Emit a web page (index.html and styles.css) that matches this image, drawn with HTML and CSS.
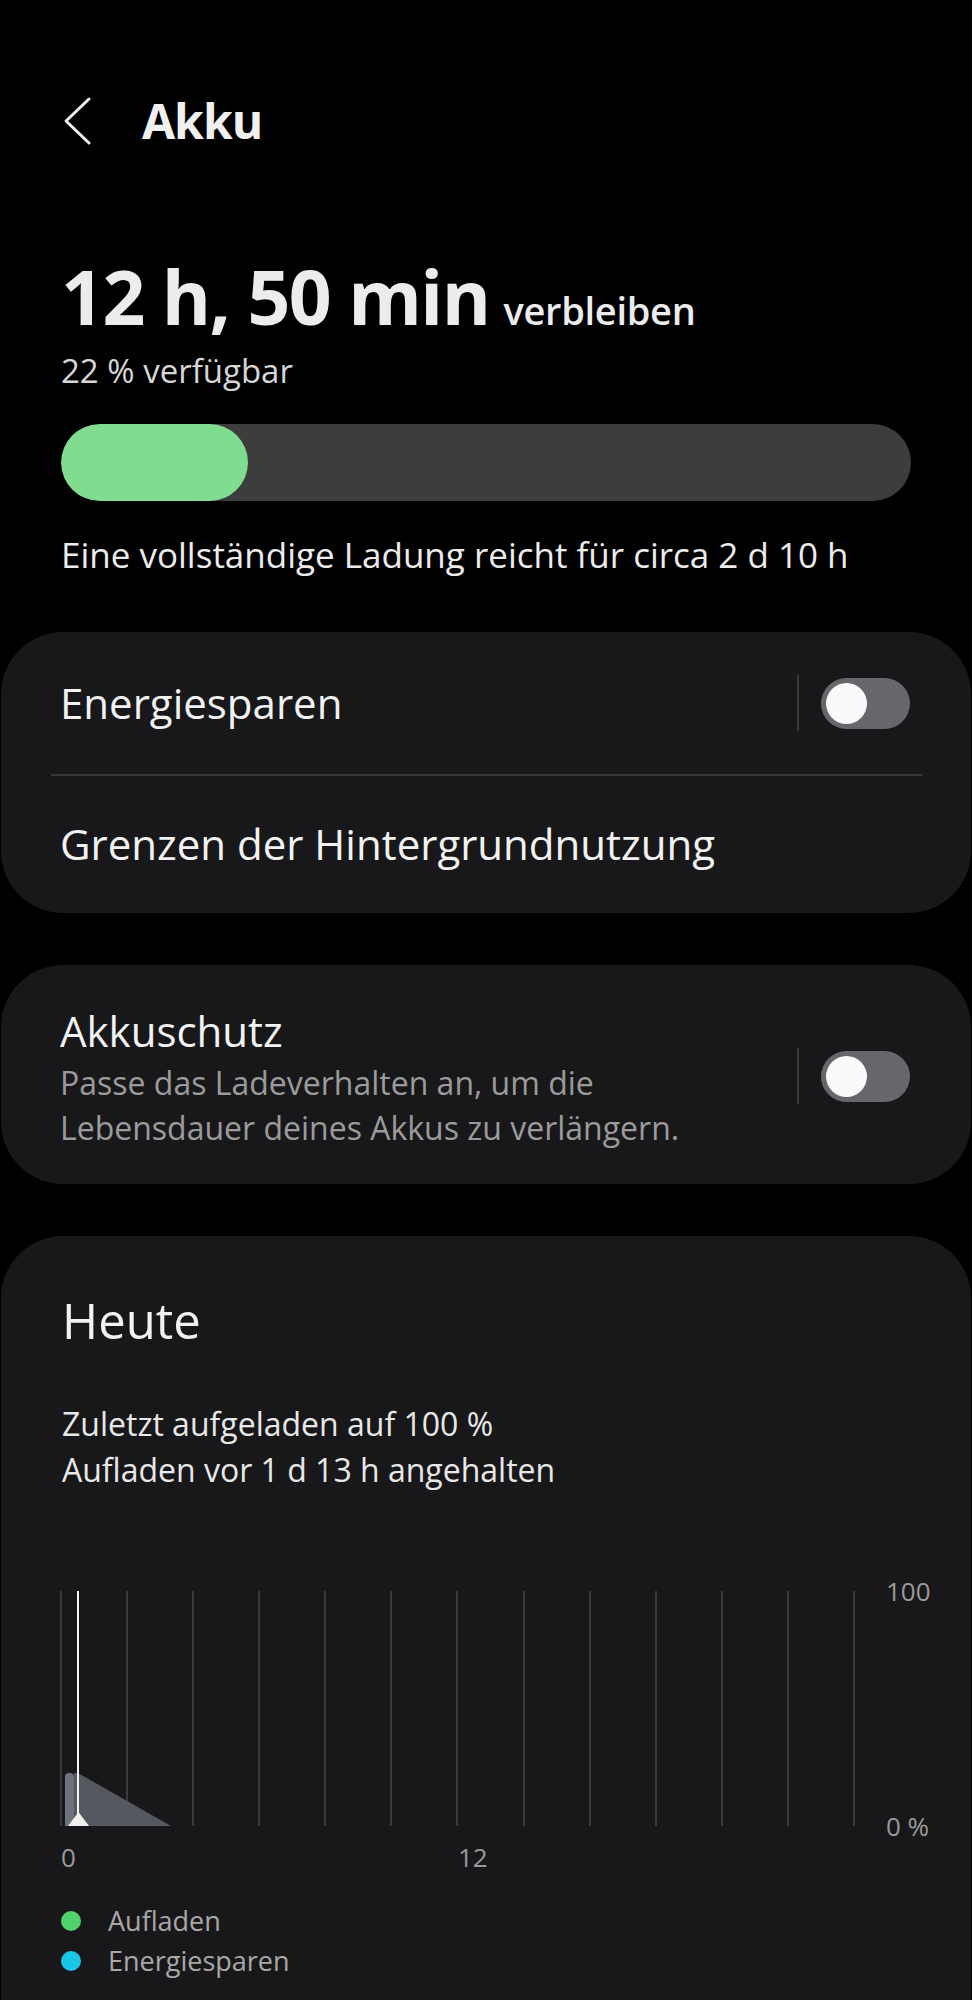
FILE: index.html
```html
<!DOCTYPE html>
<html lang="de">
<head>
  <meta charset="UTF-8">
  <meta name="viewport" content="width=device-width, initial-scale=1.0">
  <title>Akku</title>
  <link rel="stylesheet" href="styles.css">
</head>
<body>
  <div class="topbar">
    <svg class="back" width="30" height="50" viewBox="0 0 30 50">
      <polyline points="27,3 4,25 27,47" fill="none" stroke="#f2f2f2" stroke-width="3" stroke-linecap="round" stroke-linejoin="round"/>
    </svg>
    <h1>Akku</h1>
  </div>

  <div class="summary">
    <div class="remain"><span class="big">12 h, 50 min</span><span class="unit">verbleiben</span></div>
    <div class="level">22 % verfügbar</div>
    <div class="bar"><div class="bar-fill" style="width: 22%"></div></div>
    <div class="full">Eine vollständige Ladung reicht für circa 2 d 10 h</div>
  </div>

  <div class="card">
    <div class="row">
      <div class="row-title">Energiesparen</div>
      <div class="switch-wrap">
        <span class="vsep"></span>
        <span class="toggle"><span class="knob"></span></span>
      </div>
    </div>
    <div class="divider"></div>
    <div class="row row-last">
      <div class="row-title">Grenzen der Hintergrundnutzung</div>
    </div>
  </div>

  <div class="card card-protect">
    <div class="row-text">
      <div class="row-title">Akkuschutz</div>
      <div class="row-sub">Passe das Ladeverhalten an, um die<br>Lebensdauer deines Akkus zu verlängern.</div>
    </div>
    <div class="switch-wrap">
      <span class="vsep"></span>
      <span class="toggle"><span class="knob"></span></span>
    </div>
  </div>

  <div class="card card-today">
    <h2>Heute</h2>
    <p class="charge-info">Zuletzt aufgeladen auf 100 %<br>Aufladen vor 1 d 13 h angehalten</p>

    <div class="chart">
      <div class="plot-row">
        <svg class="plot" width="797" height="235" viewBox="0 0 797 235">
          <g stroke="#3a3a3c" stroke-width="2">
            <line x1="1" y1="0" x2="1" y2="235"/>
            <line x1="67" y1="0" x2="67" y2="235"/>
            <line x1="133" y1="0" x2="133" y2="235"/>
            <line x1="199" y1="0" x2="199" y2="235"/>
            <line x1="265" y1="0" x2="265" y2="235"/>
            <line x1="331" y1="0" x2="331" y2="235"/>
            <line x1="397" y1="0" x2="397" y2="235"/>
            <line x1="464" y1="0" x2="464" y2="235"/>
            <line x1="530" y1="0" x2="530" y2="235"/>
            <line x1="596" y1="0" x2="596" y2="235"/>
            <line x1="662" y1="0" x2="662" y2="235"/>
            <line x1="728" y1="0" x2="728" y2="235"/>
            <line x1="794" y1="0" x2="794" y2="235"/>
          </g>
          <!-- restliche Laufzeit -->
          <polygon points="18,182 111,235 14,235 14,182" fill="#55585e"/>
          <!-- bisheriger Verlauf -->
          <path d="M5,235 L5,186 Q5,182 9,182 L10,182 Q14,182 14,186 L14,235 Z" fill="#6c727d"/>
          <line x1="18" y1="0" x2="18" y2="235" stroke="#f4f4f4" stroke-width="2"/>
          <polygon points="8,235 29,235 18.5,221" fill="#f0f0f0"/>
        </svg>
        <div class="y-axis"><span>100</span><span>0 %</span></div>
      </div>
      <div class="x-axis"><span>0</span><span>12</span></div>
    </div>

    <ul class="legend">
      <li><span class="dot dot-charge"></span>Aufladen</li>
      <li><span class="dot dot-save"></span>Energiesparen</li>
    </ul>
  </div>
</body>
</html>
```

FILE: styles.css
```css
body {
  margin: 0;
  background: #000;
  color: #f0f0f0;
  font-family: "Open Sans", "Liberation Sans", sans-serif;
}

.topbar {
  display: flex;
  align-items: center;
  height: 86px;
  margin-top: 78px;
  padding-left: 62px;
}
.back {
  display: block;
}
h1 {
  margin: 0 0 0 50px;
  font-size: 48px;
  line-height: 1;
  font-weight: 700;
  letter-spacing: -1px;
}

.summary {
  padding: 95px 61px 0;
}
.remain {
  height: 74px;
  font-size: 75px;
  line-height: 74px;
  white-space: nowrap;
  color: #ececec;
}
.big {
  font-weight: 700;
  letter-spacing: -1.5px;
}
.unit {
  margin-left: 14px;
  font-size: 38px;
  line-height: 1;
  font-weight: 600;
  letter-spacing: -0.3px;
}
.level {
  margin-top: 21px;
  font-size: 33px;
  line-height: 33px;
  color: #d6d6d6;
}
.bar {
  margin-top: 37px;
  height: 77px;
  border-radius: 39px;
  background: #3d3d3d;
  overflow: hidden;
}
.bar-fill {
  height: 100%;
  border-radius: 39px;
  background: #80dc8f;
}
.full {
  margin-top: 36px;
  font-size: 35px;
  line-height: 35px;
  color: #ececec;
}

.card {
  margin: 60px 1px 0;
  background: #18181a;
  border-radius: 62px;
}
.row {
  display: flex;
  align-items: center;
  height: 142px;
  padding: 0 61px 0 59px;
}
.row-last {
  height: 137px;
}
.row-title {
  font-size: 42px;
  line-height: 1.2;
  color: #f2f2f2;
}
.divider {
  height: 2px;
  margin: 0 49px 0 50px;
  background: #38383a;
}
.switch-wrap {
  display: flex;
  align-items: center;
  margin-left: auto;
}
.vsep {
  width: 2px;
  height: 56px;
  margin-right: 22px;
  background: #3a3a3c;
}
.toggle {
  display: block;
  box-sizing: border-box;
  width: 89px;
  height: 51px;
  padding: 5px;
  border-radius: 26px;
  background: #67676b;
}
.knob {
  display: block;
  width: 41px;
  height: 41px;
  border-radius: 50%;
  background: #fafafa;
}

.card-protect {
  display: flex;
  align-items: center;
  margin-top: 52px;
  padding: 37px 61px 34px 59px;
}
.card-protect .row-title {
  line-height: 58px;
}
.row-sub {
  font-size: 32px;
  line-height: 45px;
  color: #9b9b9b;
}

.card-today {
  margin-top: 52px;
  padding: 60px 40px 19px 61px;
  border-radius: 62px 62px 0 0;
}
h2 {
  margin: 0;
  font-size: 49px;
  line-height: 49px;
  font-weight: 400;
  color: #f2f2f2;
}
.charge-info {
  margin: 56px 0 0;
  font-size: 32px;
  line-height: 46px;
  color: #e8e8e8;
}

.chart {
  margin-top: 98px;
}
.plot-row {
  display: flex;
}
.plot {
  display: block;
  margin-left: -2px;
}
.y-axis {
  display: flex;
  flex-direction: column;
  justify-content: space-between;
  margin-left: 29px;
  font-size: 26px;
  color: #9a9a9a;
}
.y-axis span {
  margin: -15px 0;
  line-height: 30px;
}
.x-axis {
  display: flex;
  margin: 16px 0 0 -1px;
  font-size: 26px;
  line-height: 30px;
  color: #9a9a9a;
}
.x-axis span:first-child {
  width: 397px;
}

.legend {
  list-style: none;
  margin: 29px 0 0 -1px;
  padding: 0;
  font-size: 27px;
  line-height: 40px;
  color: #a8a8a8;
}
.legend li {
  display: flex;
  align-items: center;
}
.dot {
  width: 20px;
  height: 20px;
  margin-right: 27px;
  border-radius: 50%;
}
.dot-charge {
  background: #4fd36a;
}
.dot-save {
  background: #19c6e6;
}
```
